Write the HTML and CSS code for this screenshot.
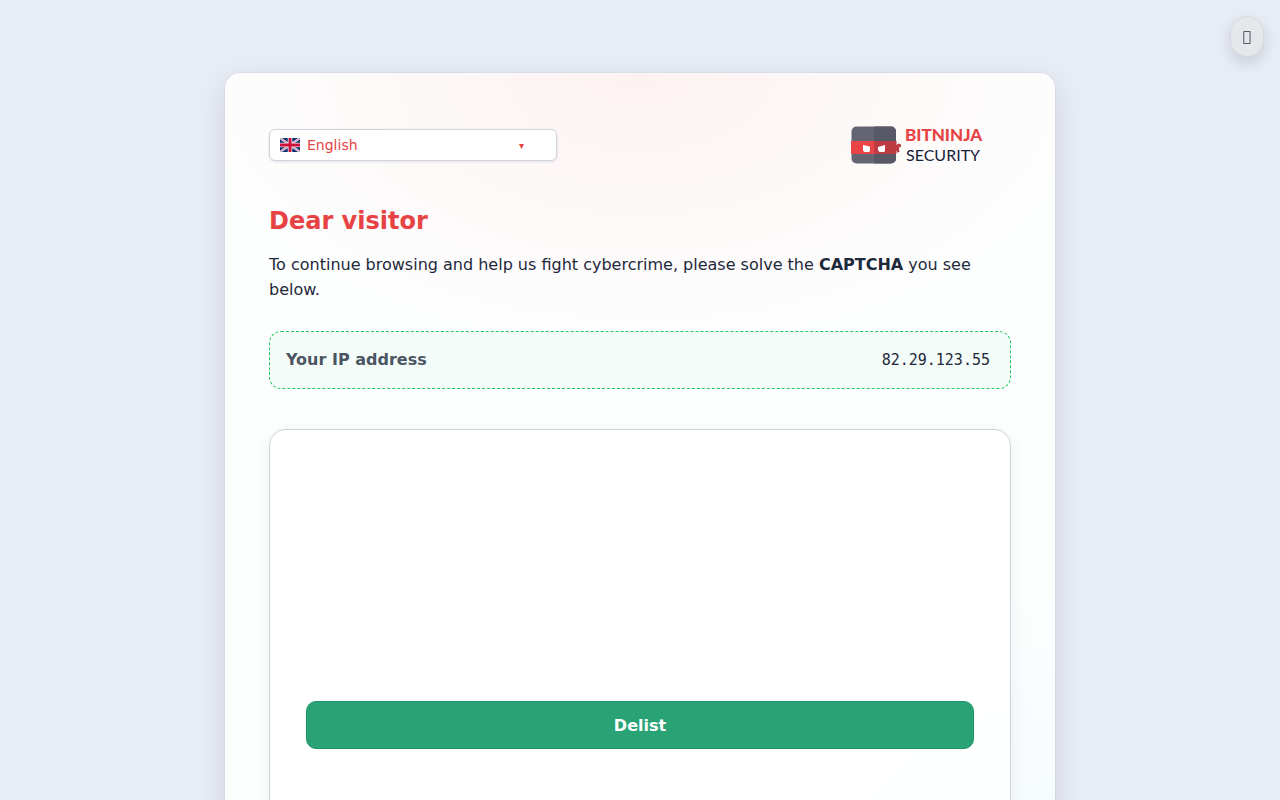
FILE: index.html
```html
<!DOCTYPE html>
<html lang="en">
<head>
  <meta charset="utf-8">
  <title>BitNinja Security</title>
  <meta name="viewport" content="width=device-width, initial-scale=1.0">
  <link rel="stylesheet" href="styles.css">
</head>
<body>
  <button class="theme-toggle" type="button" title="Toggle theme">&#xf186;</button>

  <main class="card">
    <header class="card-header">
      <div class="language">
        <svg class="language-flag" viewBox="0 0 20 14" aria-hidden="true">
          <rect width="20" height="14" fill="#0a2a6c"/>
          <path d="M0 0L20 14M20 0L0 14" stroke="#d9dde8" stroke-width="2.400"/>
          <path d="M0 0L20 14M20 0L0 14" stroke="#d6708a" stroke-width="0.800"/>
          <path d="M10 0V14M0 7H20" stroke="#e6e8ef" stroke-width="4.600"/>
          <path d="M10 0V14M0 7H20" stroke="#d0103a" stroke-width="2.800"/>
        </svg>
        <select class="language-select" id="language" aria-label="Language">
          <option>English</option>
        </select>
        <span class="language-arrow" aria-hidden="true">▾</span>
      </div>

      <svg class="logo" viewBox="0 0 160 56" role="img" aria-label="BitNinja Security">
        <rect x="0.500" y="9.500" width="44.500" height="37" rx="5" fill="#656472"/>
        <path d="M23 9.500h17a5 5 0 0 1 5 5v27a5 5 0 0 1-5 5H23z" fill="#595866"/>
        <path d="M0 24h23v13H0z" fill="#e94547"/>
        <path d="M23 24h22.500v4l2-1.500 2.500 1v3l-1.500-1-.5 2.500.5 3-2 .5-1-2v3.500H23z" fill="#bd3b43"/>
        <path d="M12 28l7 1.500v4.500l-1 1h-5l-1-2zM34 28l-7 2v3l1.500 2h4.500l1-1z" fill="#fff"/>
        <text class="logo-name" x="54" y="24">BITNINJA</text>
        <text class="logo-sub" x="55" y="44">SECURITY</text>
      </svg>
    </header>

    <h1>Dear visitor</h1>
    <p class="intro">To continue browsing and help us fight cybercrime, please solve the <strong>CAPTCHA</strong> you see below.</p>

    <div class="ip-box">
      <span class="ip-label">Your IP address</span>
      <span class="ip-value">82.29.123.55</span>
    </div>

    <form class="captcha-card">
      <div class="captcha"></div>
      <button class="delist" type="submit">Delist</button>
    </form>
  </main>
</body>
</html>
```
FILE: styles.css
```css
* {
  box-sizing: border-box;
}

body {
  margin: 0;
  padding: 72px 24px;
  background: #e8ecf5;
  color: #1e293b;
  font-family: "DejaVu Sans", sans-serif;
  font-size: 16px;
  line-height: 25px;
}

.theme-toggle {
  position: fixed;
  top: 16px;
  right: 16px;
  padding: 8px 12px;
  border: 1px solid #d5dae0;
  border-radius: 999px;
  background: #e5e7eb;
  color: #1e293b;
  font-family: "DejaVu Sans", sans-serif;
  font-size: 14px;
  line-height: 23px;
  box-shadow: 0 6px 14px rgba(15, 23, 42, 0.14);
  cursor: pointer;
}

.card {
  max-width: 832px;
  margin: 0 auto;
  padding: 44px;
  border: 1px solid rgba(148, 163, 184, 0.12);
  border-radius: 16px;
  background:
    radial-gradient(460px 270px at 50% 0, rgba(254, 226, 226, 0.42), transparent),
    radial-gradient(circle at 100% 100%, rgba(224, 242, 254, 0.4), transparent 340px),
    #fdfefe;
  background-clip: padding-box;
  box-shadow: 0 10px 30px rgba(15, 23, 42, 0.1);
}

.card-header {
  display: flex;
  align-items: center;
  justify-content: space-between;
  gap: 16px;
  margin-bottom: 32px;
}

.language {
  position: relative;
  width: 288px;
  height: 32px;
}

.language-select {
  width: 100%;
  height: 100%;
  padding: 0 36px 0 37px;
  border: 1px solid #cfd3e0;
  border-radius: 6px;
  background: #fff;
  color: #e84344;
  font-family: "DejaVu Sans", sans-serif;
  font-size: 14px;
  box-shadow: 0 1px 3px rgba(15, 23, 42, 0.1);
  appearance: none;
}

.language-flag {
  position: absolute;
  top: 9px;
  left: 11px;
  width: 20px;
  height: 14px;
  border-radius: 2px;
}

.language-arrow {
  position: absolute;
  top: 4px;
  right: 33px;
  color: #e84344;
  font-size: 10px;
  pointer-events: none;
}

.logo {
  width: 160px;
  height: 56px;
}

.logo-name,
.logo-sub {
  font-family: Lato, sans-serif;
}

.logo-name {
  fill: #e84344;
  font-size: 17px;
  font-weight: 900;
}

.logo-sub {
  fill: #17213a;
  font-size: 16px;
}

h1 {
  margin: 0 0 15px;
  color: #e84344;
  font-size: 24px;
  line-height: 32px;
}

.intro {
  margin: 0 0 29px;
}

.ip-box {
  display: flex;
  align-items: center;
  justify-content: space-between;
  margin-bottom: 40px;
  padding: 16px 20px 16px 16px;
  border: 1px dashed #22c55e;
  border-radius: 12px;
  background: #f3fcf8;
  line-height: 24px;
}

.ip-label {
  color: #4b5563;
  font-weight: 700;
}

.ip-value {
  font-family: "DejaVu Sans Mono", monospace;
  font-size: 15px;
}

.captcha-card {
  padding: 36px;
  border: 1px solid #cfd3e0;
  border-radius: 16px;
  background: rgba(255, 255, 255, 0.85);
  box-shadow: 0 6px 20px rgba(15, 23, 42, 0.06);
}

.captcha {
  min-height: 235px;
}

.delist {
  display: block;
  width: 100%;
  height: 48px;
  margin-bottom: 100px;
  border: 1px solid #1f9567;
  border-radius: 10px;
  background: #29a376;
  color: #fff;
  font-family: "DejaVu Sans", sans-serif;
  font-size: 16px;
  font-weight: 700;
  cursor: pointer;
}
```
